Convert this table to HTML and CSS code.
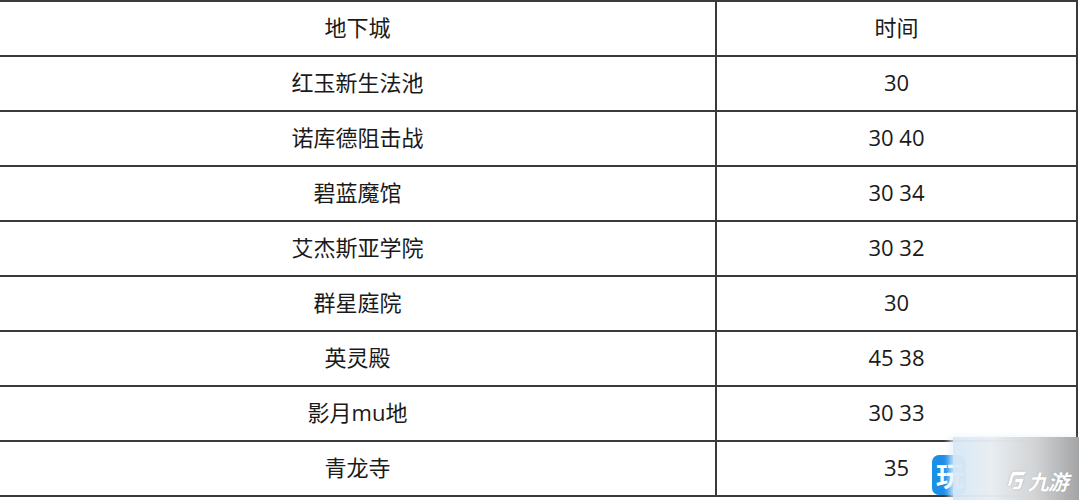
FILE: index.html
```html
<!DOCTYPE html>
<html lang="zh">
<head>
<meta charset="utf-8">
<link rel="stylesheet" href="styles.css">
</head>
<body>
<table class="dungeons">
  <tr><td class="name">地下城</td><td class="time">时间</td></tr>
  <tr><td class="name">红玉新生法池</td><td class="time">30</td></tr>
  <tr><td class="name">诺库德阻击战</td><td class="time">30 40</td></tr>
  <tr><td class="name">碧蓝魔馆</td><td class="time">30 34</td></tr>
  <tr><td class="name">艾杰斯亚学院</td><td class="time">30 32</td></tr>
  <tr><td class="name">群星庭院</td><td class="time">30</td></tr>
  <tr><td class="name">英灵殿</td><td class="time">45 38</td></tr>
  <tr><td class="name">影月mu地</td><td class="time">30 33</td></tr>
  <tr><td class="name">青龙寺</td><td class="time">35</td></tr>
</table>
<div class="badge">玩</div>
<div class="watermark">
  <svg class="swoosh" viewBox="0 0 24 24" width="21" height="21">
    <path d="M8 2 L22 2 L19 6 L10 6 Q7 6 6.5 9 L6 12 L4 18 L1 18 L4 8 Q5.5 2 8 2 Z" fill="#fff"/>
    <path d="M10 10 L19 10 L16 19 Q15 22 11 22 L6 22 L8 19 L12 19 Q13 19 13.5 17.5 L14.5 14 L9 14 Z" fill="#fff"/>
  </svg>
  <span class="brand">九游</span>
</div>
</body>
</html>
```
FILE: styles.css
```css
html, body {
  margin: 0;
  padding: 0;
  background: #ffffff;
}
body {
  position: relative;
  width: 1079px;
  height: 500px;
  overflow: hidden;
  font-family: "Open Sans", "Noto Sans CJK SC", sans-serif;
  color: #1a1a1a;
}
.dungeons {
  border-collapse: separate;
  border-spacing: 0;
  width: 1078px;
  table-layout: fixed;
  border-top: 2px solid #3a3a3a;
  border-right: 2px solid #3a3a3a;
}
.dungeons td {
  height: 50px;
  padding: 0 0 3px 0;
  box-sizing: content-box;
  border-bottom: 2px solid #3a3a3a;
  text-align: center;
  vertical-align: middle;
  font-size: 22px;
  line-height: 26px;
}
.dungeons td.name {
  width: 715px;
  border-right: 2px solid #3a3a3a;
}
.badge {
  position: absolute;
  left: 932px;
  top: 455px;
  width: 34px;
  height: 40px;
  border-radius: 7px;
  background: #1b8ee6;
  color: #fff;
  font-family: "Noto Sans CJK SC", sans-serif;
  font-size: 28px;
  font-weight: 700;
  line-height: 40px;
  padding-left: 4px;
  box-sizing: border-box;
}
.watermark {
  position: absolute;
  left: 953px;
  top: 437px;
  width: 126px;
  height: 63px;
  background: linear-gradient(90deg, rgba(214,232,246,0.96) 0%, rgba(232,237,241,0.97) 30%, #d2d4d6 65%, #a2a4a6 100%);
  box-shadow: -4px 0 6px rgba(230,240,250,0.8);
  display: flex;
  align-items: flex-end;
  gap: 2px;
  padding: 0 0 6px 54px;
  box-sizing: border-box;
}
.swoosh {
  display: block;
  flex: none;
  margin-bottom: 3px;
  filter: drop-shadow(0 0 1px rgba(0,0,0,0.2));
}
.brand {
  display: block;
  color: #ffffff;
  font-family: "Noto Sans CJK SC", sans-serif;
  font-size: 21px;
  font-weight: 700;
  line-height: 26px;
  letter-spacing: -1px;
  transform: skewX(-14deg);
  text-shadow: 0 0 1px rgba(0,0,0,0.25);
  white-space: nowrap;
}
```
